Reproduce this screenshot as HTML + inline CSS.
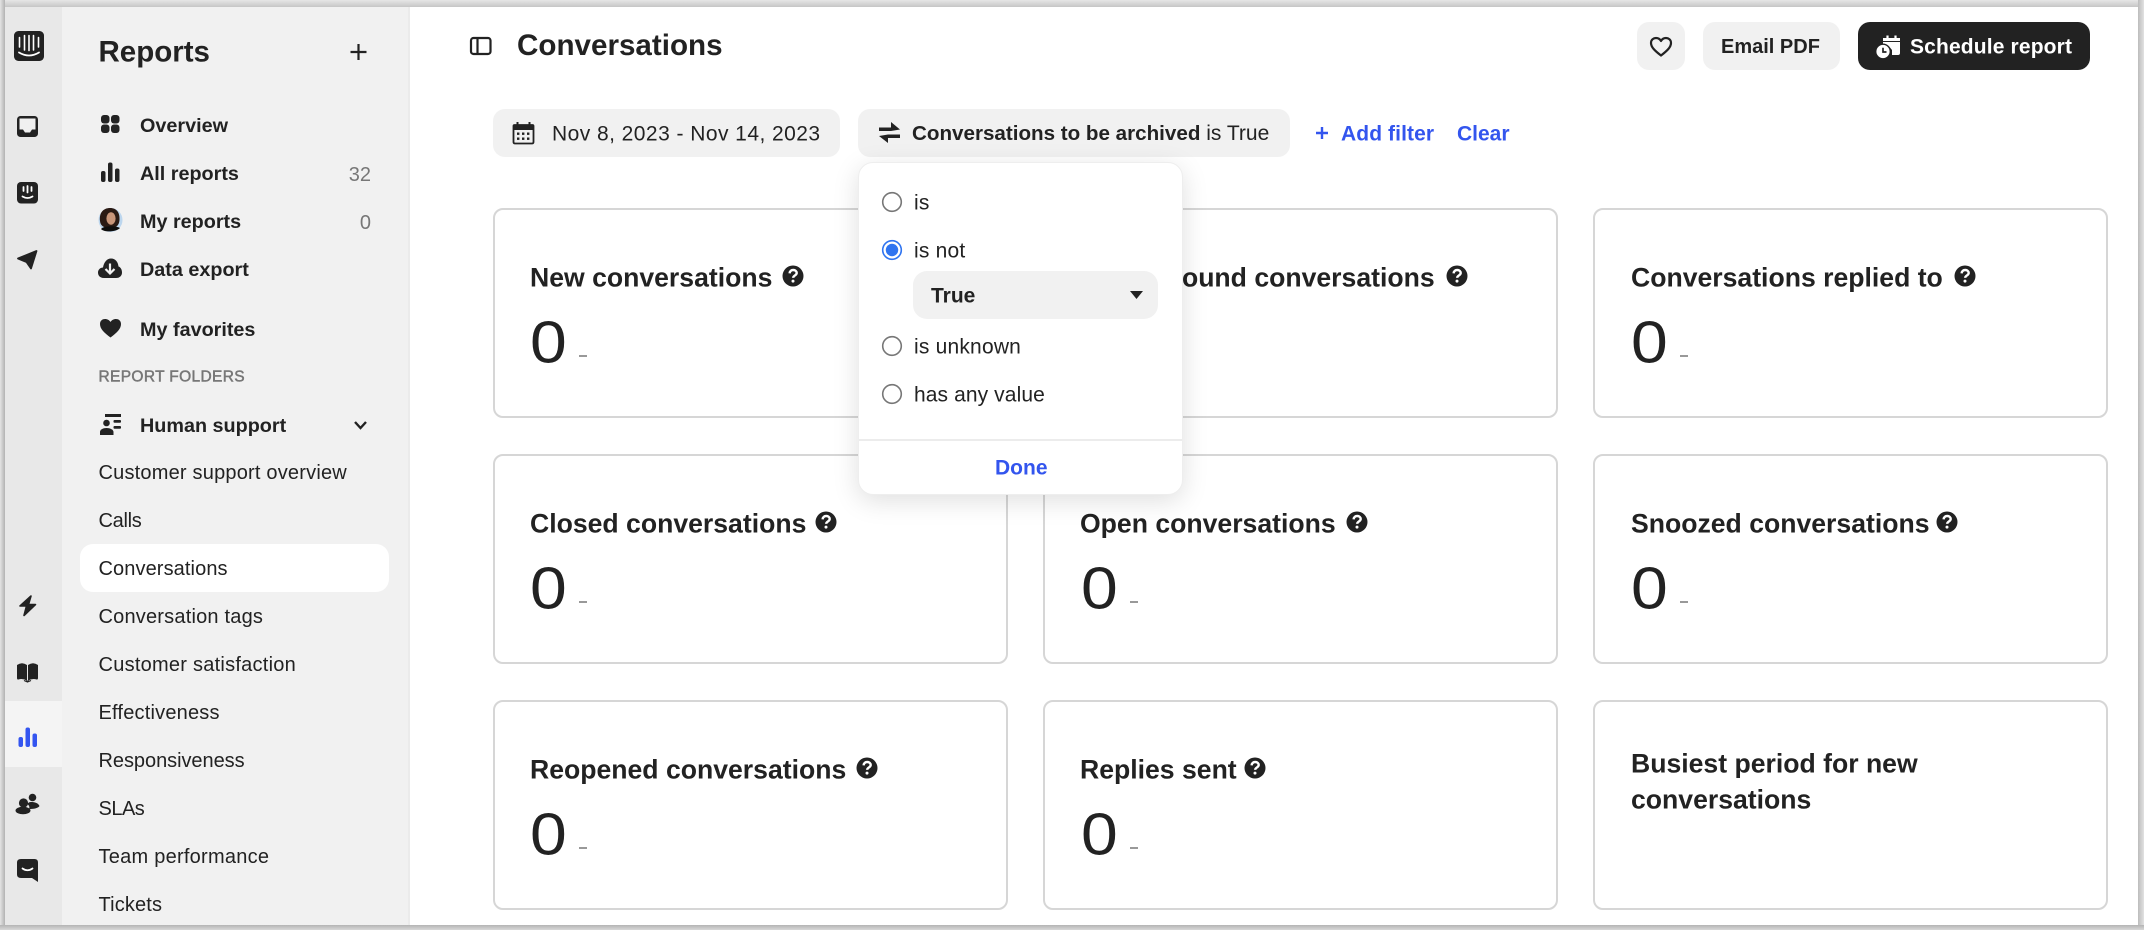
<!DOCTYPE html>
<html lang="en">
<head>
<meta charset="utf-8">
<title>Reports - Conversations</title>
<style>
html,body{margin:0;padding:0;width:2144px;height:930px;overflow:hidden;background:#c9c9c9}
body{font-family:"Liberation Sans",sans-serif;color:#222;position:relative}
#all{position:absolute;left:0;top:0;width:2144px;height:930px;filter:blur(.35px)}
.abs,.t,.card,.pill{position:absolute}
.t{white-space:nowrap;line-height:1;transform:translateY(-50%)}
.b{font-weight:700}
.edgeT{left:0;top:0;width:2144px;height:7px;background:linear-gradient(#e6e6e6,#c6c6c6)}
.edgeL{left:0;top:0;width:5px;height:930px;background:linear-gradient(90deg,#e4e4e4,#b2b2b2)}
.edgeR{left:2138px;top:0;width:6px;height:930px;background:linear-gradient(90deg,#bcbcbc,#e2e2e2)}
.edgeB{left:0;top:925px;width:2144px;height:5px;background:linear-gradient(#b4b4b4,#d8d8d8)}
#win{left:5px;top:7px;width:2133px;height:918px;background:#fff;overflow:hidden}
#rail{left:5px;top:7px;width:57px;height:918px;background:#e8e8e8}
#railOn{left:5px;top:701px;width:57px;height:66px;background:#f4f4f4}
#side{left:62px;top:7px;width:346px;height:918px;background:#f1f1f1;border-right:2px solid #ebebeb;box-sizing:content-box}
#sel{left:80px;top:544px;width:309px;height:48px;background:#fff;border-radius:13px}
.nav{font-size:20px;color:#222;letter-spacing:.2px}
.navb{font-size:19.8px;color:#222;font-weight:700}
.pill{background:#f1f1f1;border-radius:12px}
.card{box-sizing:border-box;width:515px;height:210px;border:2px solid #d6d6d6;border-radius:10px;background:#fff}
.ct{font-size:26.6px;color:#222;font-weight:700}
.z{font-size:59px;color:#222;transform:translateY(-50%) scaleX(1.12);transform-origin:left center}
.dash{position:absolute;width:8px;height:2px;background:#999}
#pop{left:858px;top:162px;width:325px;height:333px;box-sizing:border-box;background:#fff;border:1px solid #eeeeee;border-radius:15px;box-shadow:0 6px 26px rgba(0,0,0,.13)}
#icons{position:absolute;left:0;top:0;width:2144px;height:930px;pointer-events:none}
.blue{color:#3355ee;font-weight:700}
.lb{font-size:21px;letter-spacing:.2px}
</style>
</head>
<body>
<div id="all">
<div class="abs" id="win"></div>
<div class="abs" id="rail"></div>
<div class="abs" id="railOn"></div>
<div class="abs" id="side"></div>
<div class="abs" id="sel"></div>

<!-- Sidebar text -->
<div class="t b" style="left:98.5px;top:51.5px;font-size:29.5px">Reports</div>
<div class="t navb" style="left:140px;top:127px">Overview</div>
<div class="t navb" style="left:140px;top:175px">All reports</div>
<div class="t navb" style="left:140px;top:223px">My reports</div>
<div class="t navb" style="left:140px;top:271px">Data export</div>
<div class="t navb" style="left:140px;top:331px">My favorites</div>
<div class="t" style="right:1773px;top:175px;font-size:20px;color:#777">32</div>
<div class="t" style="right:1773px;top:223px;font-size:20px;color:#777">0</div>
<div class="t" style="left:98.5px;top:377px;font-size:15.5px;color:#777;-webkit-text-stroke:.5px #777;letter-spacing:.35px">REPORT FOLDERS</div>
<div class="t navb" style="left:140px;top:427px">Human support</div>
<div class="t nav" style="left:98.5px;top:473px">Customer support overview</div>
<div class="t nav" style="left:98.5px;top:521px;letter-spacing:-.3px">Calls</div>
<div class="t nav" style="left:98.5px;top:569px;letter-spacing:.1px">Conversations</div>
<div class="t nav" style="left:98.5px;top:617px">Conversation tags</div>
<div class="t nav" style="left:98.5px;top:665px;letter-spacing:.25px">Customer satisfaction</div>
<div class="t nav" style="left:98.5px;top:713px">Effectiveness</div>
<div class="t nav" style="left:98.5px;top:761px;letter-spacing:-.05px">Responsiveness</div>
<div class="t nav" style="left:98.5px;top:809px;letter-spacing:-.5px">SLAs</div>
<div class="t nav" style="left:98.5px;top:857px;letter-spacing:.25px">Team performance</div>
<div class="t nav" style="left:98.5px;top:905px;letter-spacing:.15px">Tickets</div>

<!-- Header -->
<div class="t b" style="left:517px;top:46px;font-size:29.6px">Conversations</div>
<div class="pill" style="left:1637px;top:22px;width:48px;height:48px"></div>
<div class="pill" style="left:1703px;top:22px;width:137px;height:48px"></div>
<div class="t b" style="left:1721px;top:46.5px;font-size:20px">Email PDF</div>
<div class="pill" style="left:1858px;top:22px;width:232px;height:48px;background:#222"></div>
<div class="t b" style="left:1910px;top:46.5px;font-size:21px;color:#fff;letter-spacing:.15px">Schedule report</div>

<!-- Filters -->
<div class="pill" style="left:493px;top:109px;width:347px;height:48px"></div>
<div class="t" style="left:552px;top:133.5px;font-size:21px;letter-spacing:.45px">Nov 8, 2023 - Nov 14, 2023</div>
<div class="pill" style="left:858px;top:109px;width:432px;height:48px"></div>
<div class="t" style="left:912px;top:133.5px;font-size:21px"><span class="b" style="font-size:20.6px">Conversations to be archived</span> is True</div>
<div class="t blue" style="left:1341px;top:133.5px;font-size:21px;letter-spacing:.1px">Add filter</div>
<div class="t blue" style="left:1457px;top:133.5px;font-size:21px">Clear</div>

<!-- Cards -->
<div class="card" style="left:493px;top:208px"></div>
<div class="card" style="left:1043px;top:208px"></div>
<div class="card" style="left:1593px;top:208px"></div>
<div class="card" style="left:493px;top:454px"></div>
<div class="card" style="left:1043px;top:454px"></div>
<div class="card" style="left:1593px;top:454px"></div>
<div class="card" style="left:493px;top:700px"></div>
<div class="card" style="left:1043px;top:700px"></div>
<div class="card" style="left:1593px;top:700px"></div>

<div class="t ct" style="left:530px;top:277.5px">New conversations</div>
<div class="t ct" style="left:1080px;top:277.5px">New inbound conversations</div>
<div class="t ct" style="left:1631px;top:277.5px">Conversations replied to</div>
<div class="t ct" style="left:530px;top:523.5px">Closed conversations</div>
<div class="t ct" style="left:1080px;top:523.5px">Open conversations</div>
<div class="t ct" style="left:1631px;top:523.5px">Snoozed conversations</div>
<div class="t ct" style="left:530px;top:769.5px">Reopened conversations</div>
<div class="t ct" style="left:1080px;top:769.5px">Replies sent</div>
<div class="t ct" style="left:1631px;top:763.5px">Busiest period for new</div>
<div class="t ct" style="left:1631px;top:799.5px">conversations</div>

<div class="t z" style="left:530px;top:343px">0</div><div class="dash" style="left:579px;top:355px"></div>
<div class="t z" style="left:1631px;top:343px">0</div><div class="dash" style="left:1680px;top:355px"></div>
<div class="t z" style="left:530px;top:589px">0</div><div class="dash" style="left:579px;top:601px"></div>
<div class="t z" style="left:1081px;top:589px">0</div><div class="dash" style="left:1130px;top:601px"></div>
<div class="t z" style="left:1631px;top:589px">0</div><div class="dash" style="left:1680px;top:601px"></div>
<div class="t z" style="left:530px;top:835px">0</div><div class="dash" style="left:579px;top:847px"></div>
<div class="t z" style="left:1081px;top:835px">0</div><div class="dash" style="left:1130px;top:847px"></div>

<!-- Popover -->
<div class="abs" id="pop"></div>
<div class="t lb" style="left:914px;top:203px">is</div>
<div class="t lb" style="left:914px;top:251px">is not</div>
<div class="pill" style="left:913px;top:271px;width:245px;height:48px;border-radius:14px"></div>
<div class="t b" style="left:931px;top:295.5px;font-size:21px">True</div>
<div class="t lb" style="left:914px;top:347px">is unknown</div>
<div class="t lb" style="left:914px;top:395px;letter-spacing:.1px">has any value</div>
<div class="abs" style="left:859px;top:439px;width:323px;height:2px;background:#ececec"></div>
<div class="t blue" style="left:995px;top:468px;font-size:21px">Done</div>

<div class="abs edgeT"></div><div class="abs edgeL"></div><div class="abs edgeR"></div><div class="abs edgeB"></div>

<svg id="icons" viewBox="0 0 2144 930" xmlns="http://www.w3.org/2000/svg">
  <defs>
    <g id="help">
      <circle cx="0" cy="0" r="10.5" fill="#222"/>
      <path d="M-3.4-2.6C-3.2-5 -1.6-6 .2-6 2.3-6 3.7-4.7 3.7-3 3.7-.7 .3-.5 .1 1.8" fill="none" stroke="#fff" stroke-width="2.4"/>
      <circle cx="0" cy="5.1" r="1.5" fill="#fff"/>
    </g>
  </defs>

  <!-- Logo -->
  <rect x="14" y="31" width="30" height="30" rx="4.5" fill="#222"/>
  <g stroke="#fff" stroke-width="1.6" stroke-linecap="round" fill="none">
    <path d="M19.5 37.5V47M24.5 35.5V50M29 35.5V50.5M33.5 35.5V50M38.5 37.5V47"/>
    <path d="M19 52.5Q29 58.5 39 52.5" stroke-width="1.8"/>
  </g>

  <!-- Inbox -->
  <rect x="17" y="116" width="21" height="21" rx="3.5" fill="#222"/>
  <path d="M19.5 118.5H35.5V129.5H32L30 132.5H25L23 129.5H19.5Z" fill="#f0f0f0"/>

  <!-- Face -->
  <rect x="17" y="182" width="21" height="21.5" rx="4" fill="#222"/>
  <g stroke="#fff" stroke-width="1.8" stroke-linecap="round" fill="none">
    <path d="M23.5 187V191M27.5 186V192.5M31.5 187V191"/>
    <path d="M22.5 196.5Q27.5 199.5 32.5 196.5"/>
  </g>

  <!-- Plane -->
  <path d="M18 258.5L36.5 251 31 268.5 26.5 262Z" fill="#222" stroke="#222" stroke-width="1.8" stroke-linejoin="round"/>

  <!-- Bolt -->
  <path d="M31 596L20 606H26.5L24 615.5 35.5 604.5H28.5Z" fill="#222" stroke="#222" stroke-width="1.6" stroke-linejoin="round"/>

  <!-- Book -->
  <path d="M17 665Q22 661.5 27 665V680.5Q22 678 18.5 679.5 17 679.8 17 678ZM38 665Q33 661.5 28 665V680.5Q33 678 36.5 679.5 38 679.8 38 678Z" fill="#222"/>
  <path d="M24 680.5L27.5 682 31 680.5" fill="#222" stroke="#222" stroke-width="1.2"/>

  <!-- Chart active -->
  <g fill="#3355f0">
    <rect x="18.5" y="737" width="4.5" height="10" rx="2"/>
    <rect x="25.5" y="727.5" width="4.5" height="19.5" rx="2"/>
    <rect x="32.5" y="733.5" width="4.5" height="13.5" rx="2"/>
  </g>

  <!-- People -->
  <g fill="#222">
    <circle cx="23.5" cy="803" r="4.6"/>
    <circle cx="32.5" cy="797.5" r="3.8"/>
    <ellipse cx="23" cy="810.5" rx="7.5" ry="3.8"/>
    <path d="M29 809C33 809 38 808.5 39.5 806 38 802.5 34 802 31 802 29 802 28 803 27.5 804 29 805.5 30 807 29 809Z"/>
  </g>

  <!-- Chat -->
  <path d="M21 859H34.5Q38 859 38 862.5V882L32 878H21Q17 878 17 874.5V862.5Q17 859 21 859Z" fill="#222"/>
  <path d="M22.5 868.5Q27.5 872 32.5 868.5" fill="none" stroke="#fff" stroke-width="1.8" stroke-linecap="round"/>

  <!-- Plus -->
  <path d="M358.5 44V60M350.5 52H366.5" stroke="#222" stroke-width="2.2" fill="none"/>

  <!-- Overview -->
  <g fill="#222">
    <rect x="101" y="115" width="8.5" height="8.5" rx="3"/>
    <rect x="111" y="115" width="8.5" height="8.5" rx="3"/>
    <rect x="101" y="124.5" width="8.5" height="8.5" rx="3"/>
    <rect x="111" y="124.5" width="8.5" height="8.5" rx="3"/>
  </g>

  <!-- All reports -->
  <g fill="#222">
    <rect x="101" y="171" width="4.5" height="11" rx="2"/>
    <rect x="108" y="162.5" width="4.5" height="19.5" rx="2"/>
    <rect x="115" y="168.5" width="4.5" height="13.5" rx="2"/>
  </g>

  <!-- Avatar -->
  <circle cx="110.5" cy="220" r="12" fill="#bcd6ee"/>
  <path d="M100 221C99 212 104 208 110 208 117 208 120 213 119.5 220 119 226 116 228 110 228 104 228 100.5 226 100 221Z" fill="#2a1a14"/>
  <ellipse cx="111" cy="218.5" rx="4.6" ry="6.2" fill="#c8967a"/>
  <path d="M101 229C104 225.5 116 225.5 120 228 117 231.5 105 233 101 229Z" fill="#0e0e0e"/>

  <!-- Export -->
  <path d="M104 278C99 278 98 274.5 98 272.5 98 269.5 100.5 267.5 103 267.5 104 262 107 258.5 111 258.5 115.5 258.5 118 262 118.5 266.5 120.5 267 122 269.5 122 272.5 122 275.5 120 278 116 278Z" fill="#222"/>
  <path d="M110 263.5V273M105.5 269L110 273.5 114.5 269" fill="none" stroke="#f1f1f1" stroke-width="2.2"/>

  <!-- Favorite heart -->
  <path d="M110.5 337.5C104 332.5 100 329 100 324 100 320.5 102.6 319 105 319 107.5 319 109.5 320.3 110.5 322 111.5 320.3 113.5 319 116 319 118.4 319 121 320.5 121 324 121 329 117 332.5 110.5 337.5Z" fill="#222"/>

  <!-- Human support -->
  <g fill="#222">
    <rect x="105" y="414" width="16" height="3"/>
    <rect x="113.5" y="420" width="7.5" height="2.8" rx="1"/>
    <rect x="113.5" y="426" width="7.5" height="2.8" rx="1"/>
    <circle cx="106.5" cy="423" r="3.3"/>
    <path d="M100 435V432C100 429.5 103 428 106.5 428 110 428 113.5 429.5 113.5 432V435Z"/>
  </g>

  <!-- Chevron -->
  <path d="M355 422L360.5 428 366 422" fill="none" stroke="#222" stroke-width="2.4"/>

  <!-- Panel toggle -->
  <rect x="471" y="38" width="19.5" height="16" rx="2.5" fill="none" stroke="#222" stroke-width="2.2"/>
  <path d="M477.5 38V54" stroke="#222" stroke-width="2.2"/>

  <!-- Calendar -->
  <path d="M514.5 125H532.5Q533.5 125 533.5 126V142Q533.5 143.5 532 143.5H515Q513.5 143.5 513.5 142V126Q513.5 125 514.5 125Z" fill="none" stroke="#222" stroke-width="1.8"/>
  <rect x="513.5" y="124.5" width="20" height="5.5" fill="#222"/>
  <path d="M517.5 122V126M529.5 122V126" stroke="#222" stroke-width="2"/>
  <g fill="#222">
    <rect x="517" y="132.5" width="2.4" height="2.4"/><rect x="522" y="132.5" width="2.4" height="2.4"/><rect x="527" y="132.5" width="2.4" height="2.4"/>
    <rect x="517" y="137.5" width="2.4" height="2.4"/><rect x="522" y="137.5" width="2.4" height="2.4"/><rect x="527" y="137.5" width="2.4" height="2.4"/>
  </g>

  <!-- Swap -->
  <g fill="#222">
    <path d="M879 127.5H891V122L900 129.5 891 131H879Z"/>
    <path d="M900 134.5V138H888V143L879 136 888 134.5Z"/>
  </g>

  <!-- Add filter plus -->
  <path d="M1322 127V139M1316 133H1328" stroke="#3355ee" stroke-width="2.4" fill="none"/>

  <!-- Outline heart -->
  <path d="M1661 55.5C1654.5 50.5 1651 47 1651 43 1651 39.5 1653.7 38 1656 38 1658.2 38 1660 39.2 1661 41 1662 39.2 1663.8 38 1666 38 1668.3 38 1671 39.5 1671 43 1671 47 1667.5 50.5 1661 55.5Z" fill="none" stroke="#222" stroke-width="2.2" stroke-linejoin="round"/>

  <!-- Schedule icon -->
  <path d="M1883 42H1900V53Q1900 55 1898 55H1892V50Q1888 44 1883 44.5Z" fill="#fff"/>
  <rect x="1883" y="38" width="17" height="3" fill="#fff"/>
  <path d="M1887.5 35.5V38M1895.5 35.5V38" stroke="#fff" stroke-width="2.2"/>
  <circle cx="1883" cy="51.5" r="8" fill="#222"/>
  <circle cx="1883" cy="51.5" r="6.6" fill="#fff"/>
  <path d="M1883 47.8V52H1886.5" fill="none" stroke="#222" stroke-width="1.7"/>

  <!-- Help icons -->
  <use href="#help" x="793" y="276"/>
  <use href="#help" x="1457" y="276"/>
  <use href="#help" x="1965" y="276"/>
  <use href="#help" x="826" y="522"/>
  <use href="#help" x="1357" y="522"/>
  <use href="#help" x="1947" y="522"/>
  <use href="#help" x="867" y="768"/>
  <use href="#help" x="1255" y="768"/>

  <!-- Radios -->
  <circle cx="892" cy="202" r="9.3" fill="#fff" stroke="#777" stroke-width="1.6"/>
  <circle cx="892" cy="250" r="9.3" fill="#fff" stroke="#2f74f0" stroke-width="1.6"/>
  <circle cx="892" cy="250" r="6.2" fill="#2f74f0"/>
  <circle cx="892" cy="346" r="9.3" fill="#fff" stroke="#777" stroke-width="1.6"/>
  <circle cx="892" cy="394" r="9.3" fill="#fff" stroke="#777" stroke-width="1.6"/>

  <!-- Select caret -->
  <path d="M1130 291H1143L1136.5 299Z" fill="#222"/>
</svg>
</div>
</body>
</html>
